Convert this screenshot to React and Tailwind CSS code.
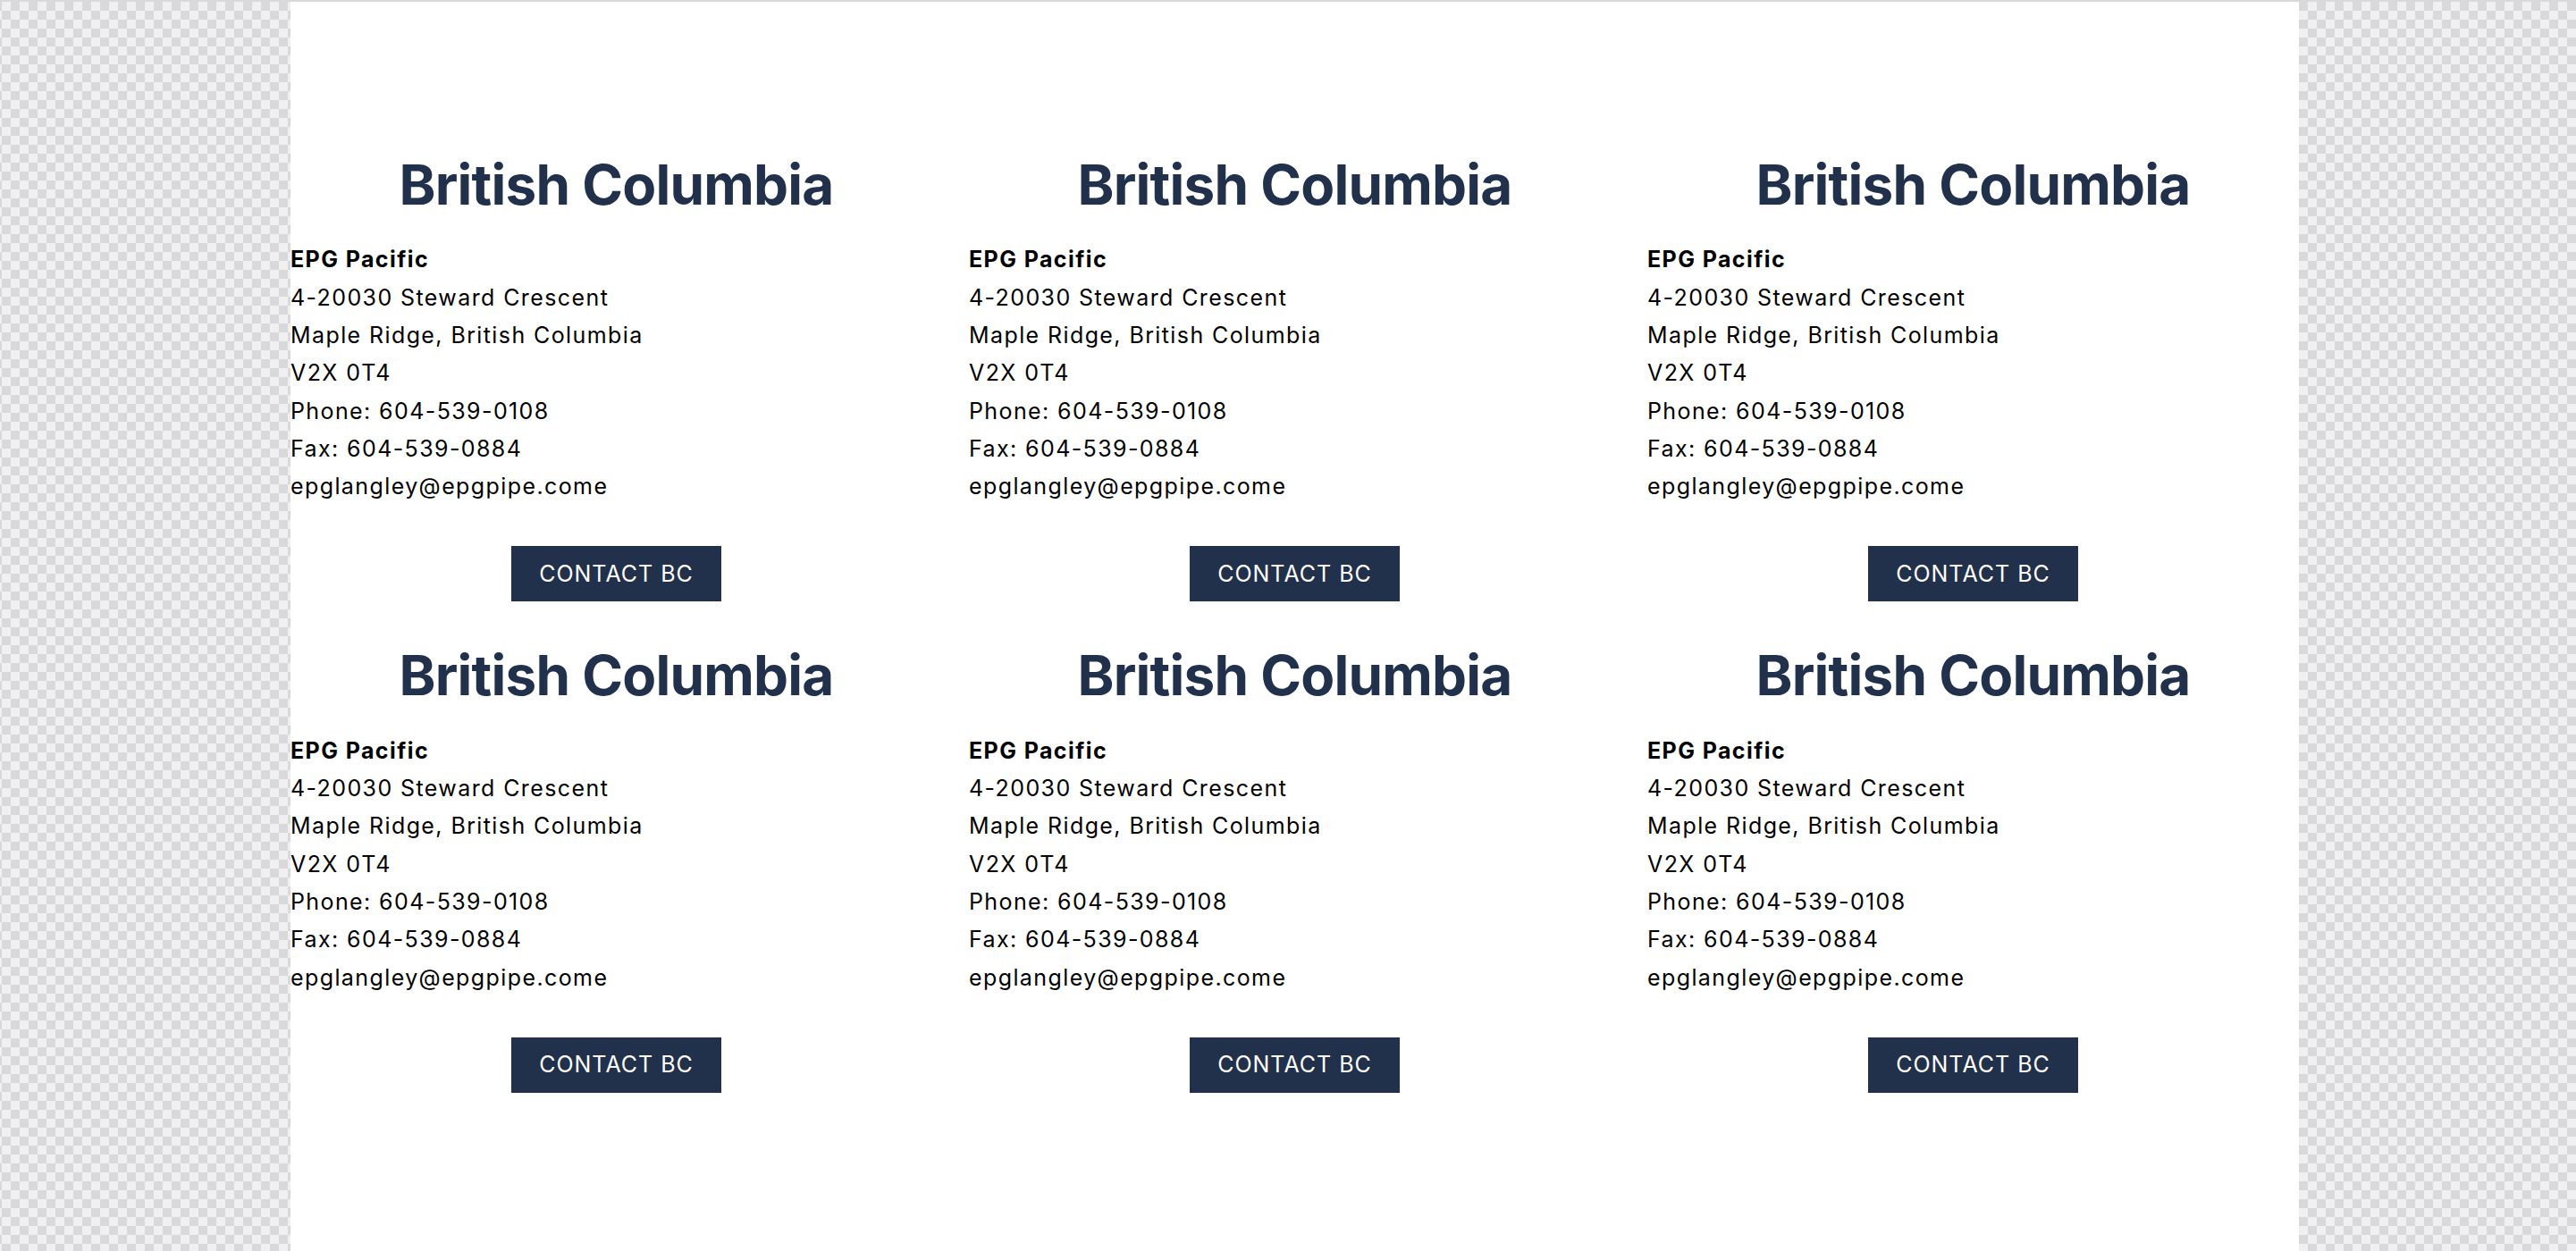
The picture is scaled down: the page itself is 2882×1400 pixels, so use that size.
const offices = Array.from({ length: 6 }, (_, i) => ({
  id: i,
  region: "British Columbia",
  name: "EPG Pacific",
  lines: [
    "4-20030 Steward Crescent",
    "Maple Ridge, British Columbia",
    "V2X 0T4",
    "Phone: 604-539-0108",
    "Fax: 604-539-0884",
    "epglangley@epgpipe.come",
  ],
  button: "CONTACT BC",
}));

function OfficeCard({ office }) {
  return (
    <div className="flex flex-col">
      <h2 className="text-center text-[62px] leading-[1.2] font-bold tracking-[-0.8px] text-[#21304b]">
        {office.region}
      </h2>
      <div className="mt-[25px] text-[25px] leading-[42.3px] tracking-[1.4px] text-black">
        <p className="font-bold">{office.name}</p>
        {office.lines.map((line) => (
          <p key={line}>{line}</p>
        ))}
      </div>
      <div className="mt-[46px] flex justify-center">
        <button className="h-[62px] bg-[#21304b] px-[31px] text-[25px] tracking-[1px] text-white">
          {office.button}
        </button>
      </div>
    </div>
  );
}

export default function App() {
  return (
    <div
      className="min-h-screen w-full border-t-2 border-[#d9d9d9] bg-[conic-gradient(#d9d9dc_25%,#f0f0f2_0_50%,#d9d9dc_0_75%,#f0f0f2_0)] bg-[length:20px_20px] bg-[position:2px_0px]"
      style={{ fontFamily: "Inter, 'Noto Sans', sans-serif" }}
    >
      <div className="ml-[325px] min-h-[1398px] w-[2247px] bg-white pt-[168px]">
        <div className="grid grid-cols-3 gap-x-[30px] gap-y-[46px]">
          {offices.map((office) => (
            <OfficeCard key={office.id} office={office} />
          ))}
        </div>
      </div>
    </div>
  );
}
